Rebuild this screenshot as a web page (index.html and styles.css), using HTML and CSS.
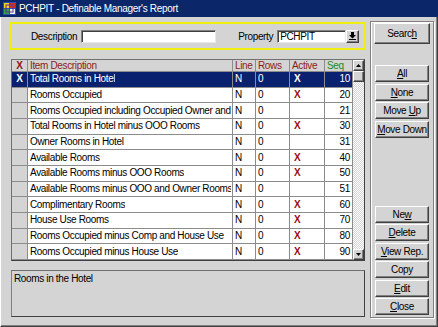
FILE: index.html
```html
<!DOCTYPE html>
<html lang="en">
<head>
  <meta charset="UTF-8" />
  <title>PCHPIT - Definable Manager's Report</title>
  <link rel="stylesheet" href="styles.css">
</head>
<body>
<div class="window">

  <div class="titlebar">
    <svg class="app-icon" width="13" height="13" viewBox="0 0 13 13">
      <rect x="0" y="0" width="13" height="13" fill="#2a4fb0"/>
      <rect x="1" y="1" width="5" height="5" fill="#f4d020"/>
      <rect x="7" y="1" width="5" height="5" fill="#d83020"/>
      <rect x="1" y="7" width="5" height="5" fill="#30a040"/>
      <rect x="7" y="7" width="5" height="5" fill="#f0f0f0"/>
      <rect x="3" y="3" width="7" height="7" fill="none" stroke="#6030a0" stroke-width="1"/>
    </svg>
    <span class="title">PCHPIT - Definable Manager's Report</span>
  </div>

  <div class="frame">
    <div class="main">

      <div class="filter">
        <span class="field-label">Description</span>
        <div class="textbox desc-input"></div>
        <span class="field-label prop-label">Property</span>
        <div class="textbox prop-input">PCHPIT</div>
        <div class="drop-btn">
          <svg width="7" height="8" viewBox="0 0 7 8">
            <path d="M2 0h3v3h2L3.5 6.5 0 3h2z" fill="#000"/>
            <rect x="0" y="7" width="7" height="1" fill="#000"/>
          </svg>
        </div>
      </div>

      <div class="grid">
        <div class="grid-body">
          <div class="row head">
            <div class="cell chk red">X</div>
            <div class="cell desc red">Item Description</div>
            <div class="cell red">Line</div>
            <div class="cell red">Rows</div>
            <div class="cell red">Active</div>
            <div class="cell seq-head green">Seq</div>
          </div>
          <div class="row selected">
            <div class="cell chk">X</div>
            <div class="cell desc"><span class="clip">Total Rooms in Hotel</span></div>
            <div class="cell">N</div>
            <div class="cell">0</div>
            <div class="cell mark">X</div>
            <div class="cell seq">10</div>
          </div>
          <div class="row">
            <div class="cell chk"></div>
            <div class="cell desc"><span class="clip">Rooms Occupied</span></div>
            <div class="cell">N</div>
            <div class="cell">0</div>
            <div class="cell mark">X</div>
            <div class="cell seq">20</div>
          </div>
          <div class="row">
            <div class="cell chk"></div>
            <div class="cell desc"><span class="clip">Rooms Occupied including Occupied Owner and Allotment</span></div>
            <div class="cell">N</div>
            <div class="cell">0</div>
            <div class="cell mark"></div>
            <div class="cell seq">21</div>
          </div>
          <div class="row">
            <div class="cell chk"></div>
            <div class="cell desc"><span class="clip">Total Rooms in Hotel minus OOO Rooms</span></div>
            <div class="cell">N</div>
            <div class="cell">0</div>
            <div class="cell mark">X</div>
            <div class="cell seq">30</div>
          </div>
          <div class="row">
            <div class="cell chk"></div>
            <div class="cell desc"><span class="clip">Owner Rooms in Hotel</span></div>
            <div class="cell">N</div>
            <div class="cell">0</div>
            <div class="cell mark"></div>
            <div class="cell seq">31</div>
          </div>
          <div class="row">
            <div class="cell chk"></div>
            <div class="cell desc"><span class="clip">Available Rooms</span></div>
            <div class="cell">N</div>
            <div class="cell">0</div>
            <div class="cell mark">X</div>
            <div class="cell seq">40</div>
          </div>
          <div class="row">
            <div class="cell chk"></div>
            <div class="cell desc"><span class="clip">Available Rooms minus OOO Rooms</span></div>
            <div class="cell">N</div>
            <div class="cell">0</div>
            <div class="cell mark">X</div>
            <div class="cell seq">50</div>
          </div>
          <div class="row">
            <div class="cell chk"></div>
            <div class="cell desc"><span class="clip">Available Rooms minus OOO and Owner Rooms</span></div>
            <div class="cell">N</div>
            <div class="cell">0</div>
            <div class="cell mark"></div>
            <div class="cell seq">51</div>
          </div>
          <div class="row">
            <div class="cell chk"></div>
            <div class="cell desc"><span class="clip">Complimentary Rooms</span></div>
            <div class="cell">N</div>
            <div class="cell">0</div>
            <div class="cell mark">X</div>
            <div class="cell seq">60</div>
          </div>
          <div class="row">
            <div class="cell chk"></div>
            <div class="cell desc"><span class="clip">House Use Rooms</span></div>
            <div class="cell">N</div>
            <div class="cell">0</div>
            <div class="cell mark">X</div>
            <div class="cell seq">70</div>
          </div>
          <div class="row">
            <div class="cell chk"></div>
            <div class="cell desc"><span class="clip">Rooms Occupied minus Comp and House Use</span></div>
            <div class="cell">N</div>
            <div class="cell">0</div>
            <div class="cell mark">X</div>
            <div class="cell seq">80</div>
          </div>
          <div class="row">
            <div class="cell chk"></div>
            <div class="cell desc"><span class="clip">Rooms Occupied minus House Use</span></div>
            <div class="cell">N</div>
            <div class="cell">0</div>
            <div class="cell mark">X</div>
            <div class="cell seq">90</div>
          </div>
        </div>

        <div class="vscroll">
          <div class="sb-btn">
            <svg width="5" height="3" viewBox="0 0 5 3"><path d="M2.5 0L5 3H0z" fill="#000"/></svg>
          </div>
          <div class="sb-thumb"></div>
          <div class="sb-track"></div>
          <div class="sb-btn">
            <svg width="5" height="3" viewBox="0 0 5 3"><path d="M0 0h5L2.5 3z" fill="#000"/></svg>
          </div>
        </div>
      </div>

      <div class="memo">Rooms in the Hotel</div>
    </div>

    <div class="side">
      <div class="btn-group">
        <div class="btn btn-search"><span>Searc<u>h</u></span></div>
        <div class="btn-stack">
          <div class="btn"><span><u>A</u>ll</span></div>
          <div class="btn"><span><u>N</u>one</span></div>
          <div class="btn"><span>Move <u>U</u>p</span></div>
          <div class="btn"><span><u>M</u>ove Down</span></div>
        </div>
      </div>
      <div class="btn-stack">
        <div class="btn"><span>Ne<u>w</u></span></div>
        <div class="btn"><span><u>D</u>elete</span></div>
        <div class="btn"><span><u>V</u>iew Rep.</span></div>
        <div class="btn"><span>Copy</span></div>
        <div class="btn"><span><u>E</u>dit</span></div>
        <div class="btn"><span><u>C</u>lose</span></div>
      </div>
    </div>
  </div>

</div>
</body>
</html>
```

FILE: styles.css
```css
* {
  box-sizing: border-box;
}

body {
  margin: 0;
  background: #d4d4d4;
  font-family: "Liberation Sans", Arial, sans-serif;
  font-size: 10px;
  letter-spacing: -0.35px;
  color: #000;
}

.window {
  width: 438px;
  height: 327px;
  display: flex;
  flex-direction: column;
  overflow: hidden;
}

/* title bar */
.titlebar {
  height: 17px;
  flex: none;
  background: #0b2769;
  color: #fff;
  display: flex;
  align-items: center;
  gap: 3px;
  padding-left: 3px;
}

.title {
  font-size: 10px;
  letter-spacing: -0.3px;
}

/* body frame */
.frame {
  flex: 1;
  display: flex;
  gap: 5px;
  padding: 4px 3px 8px 9px;
  border-left: 1px solid #fff;
  border-right: 1px solid #404040;
  border-bottom: 1px solid #404040;
  box-shadow: inset -1px -1px #808080;
}

.main {
  width: 355px;
  padding-top: 1px;
  display: flex;
  flex-direction: column;
}

/* filter box */
.filter {
  height: 28px;
  border: 2px solid #eeee10;
  display: flex;
  align-items: center;
  padding-left: 19px;
}

.field-label {
  margin-right: 4px;
}

.prop-label {
  margin-left: 22px;
}

.textbox {
  height: 13px;
  background: #fff;
  border: 1px solid;
  border-color: #808080 #e8e8e8 #e8e8e8 #808080;
  box-shadow: inset 1px 1px #404040;
  line-height: 11px;
  padding-left: 2px;
}

.desc-input {
  width: 135px;
}

.prop-input {
  width: 69px;
}

.drop-btn {
  width: 13px;
  height: 13px;
  background: #d4d4d4;
  border: 1px solid;
  border-color: #fff #404040 #404040 #fff;
  box-shadow: inset -1px -1px #808080;
  display: flex;
  align-items: center;
  justify-content: center;
}

/* report grid */
.grid {
  margin: 9px 0 0 1px;
  width: 354px;
  height: 202px;
  display: flex;
  border: 1px solid;
  border-color: #707070 #404040 #404040 #707070;
  background: #fff;
}

.grid-body {
  width: 340px;
  display: flex;
  flex-direction: column;
}

.row {
  display: grid;
  grid-template-columns: 16px 205px 23px 34px 35px 27px;
  height: 15.67px;
  line-height: 14px;
}

.row.head {
  height: 12px;
  line-height: 11px;
  background: #d4d4d4;
}

.cell {
  border-right: 1px solid #8c8c8c;
  border-bottom: 1px solid #8c8c8c;
  padding: 0 1px 0 2px;
  overflow: hidden;
  white-space: nowrap;
  display: flex;
  align-items: center;
}

.cell:last-child {
  border-right: none;
}

.clip {
  display: block;
  max-width: 100%;
  overflow: hidden;
  white-space: nowrap;
}

.cell.chk {
  background: #d4d4d4;
  justify-content: center;
  padding: 0;
  font-weight: bold;
  font-size: 10px;
  color: #8e1414;
}

.cell.mark {
  font-weight: bold;
  font-size: 10px;
  color: #9a1010;
  padding-left: 4px;
}

.cell.seq {
  justify-content: flex-end;
  padding-right: 2px;
}

.red {
  color: #8e1b1b;
}

.green {
  color: #1a8c1a;
}

.row.selected .cell {
  background: #0a2170;
  color: #fff;
}

/* scrollbar */
.vscroll {
  width: 12px;
  border-left: 1px solid #8c8c8c;
  display: flex;
  flex-direction: column;
}

.sb-btn,
.sb-thumb {
  height: 11px;
  flex: none;
  background: #d4d4d4;
  border: 1px solid;
  border-color: #fff #404040 #404040 #fff;
  box-shadow: inset -1px -1px #808080;
  display: flex;
  align-items: center;
  justify-content: center;
}

.sb-track {
  flex: 1;
  background: repeating-conic-gradient(#fff 0 25%, #d4d4d4 0 50%) 0 0 / 2px 2px;
}

/* memo */
.memo {
  margin: 9px 0 0 1px;
  width: 354px;
  height: 47px;
  border: 1px solid;
  border-color: #707070 #404040 #404040 #808080;
  padding: 2px 2px;
  line-height: 11px;
}

/* side buttons */
.side {
  width: 64px;
  height: 297px;
  border: 1px solid #808080;
  box-shadow: inset 1px 1px #fff, 1px 1px #fff;
  display: flex;
  flex-direction: column;
  justify-content: space-between;
  align-items: center;
  padding: 1px 0 2px;
}

.btn-group {
  display: flex;
  flex-direction: column;
  align-items: center;
}

.btn-stack {
  display: flex;
  flex-direction: column;
  gap: 1.5px;
}

.btn {
  width: 54px;
  height: 17px;
  background: #d4d4d4;
  border: 1px solid;
  border-color: #fff #404040 #404040 #fff;
  box-shadow: inset -1px -1px #808080;
  display: flex;
  align-items: center;
  justify-content: center;
  white-space: nowrap;
}

.btn-search {
  width: 56px;
  height: 21px;
  margin-bottom: 21px;
}
```
